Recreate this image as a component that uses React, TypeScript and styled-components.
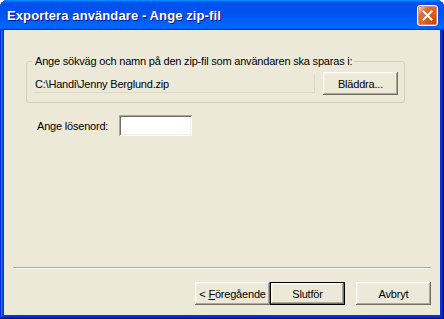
import React from "react";
import styled, { createGlobalStyle } from "styled-components";

const colors = {
  face: "#ECE9D8",
  highlight: "#FFFFFF",
  light: "#F1EFE2",
  shadow: "#ACA899",
  darkShadow: "#716F64",
  groupLine: "#D0D0BF",
  text: "#000000",
};

const GlobalStyle = createGlobalStyle`
  html, body {
    margin: 0;
    padding: 0;
    background: #ffffff;
  }
  body {
    font-family: Tahoma, "Liberation Sans", Arial, sans-serif;
    font-size: 11px;
    letter-spacing: -0.2px;
    color: ${colors.text};
  }
`;

const Window = styled.div`
  width: 444px;
  height: 319px;
  display: flex;
  flex-direction: column;
  border-radius: 8px 8px 0 0;
  overflow: hidden;
  background: #0831d9;
  box-shadow: inset -1px -1px #00138c, inset 1px 1px #0831d9,
    inset -2px -2px #001ea0, inset 2px 2px #166aee, inset -3px -3px #003bda,
    inset 3px 3px #0855dd;
`;

const TitleBar = styled.div`
  height: 30px;
  flex: 0 0 30px;
  display: flex;
  align-items: center;
  justify-content: space-between;
  padding: 0 6px 0 7px;
  box-sizing: border-box;
  background: linear-gradient(
    180deg,
    #0997ff,
    #0053ee 8%,
    #0050ee 40%,
    #06f 88%,
    #06f 93%,
    #005bff 95%,
    #003dd7 96%,
    #003dd7
  );
`;

const Title = styled.span`
  color: #ffffff;
  font-family: "Trebuchet MS", "Liberation Sans", Arial, sans-serif;
  font-weight: bold;
  font-size: 13px;
  letter-spacing: 0.1px;
  text-shadow: 1px 1px #0f1089;
  padding-top: 1px;
`;

const CloseButton = styled.button`
  width: 21px;
  height: 21px;
  padding: 0;
  border: 1px solid #ffffff;
  border-radius: 3px;
  display: flex;
  align-items: center;
  justify-content: center;
  background: radial-gradient(
    circle at 90% 90%,
    #cc4600 0,
    #dc6527 55%,
    #cd7546 70%,
    #ffccb2 90%,
    #fff 100%
  );
  box-shadow: inset 0 0 0 1px #e9855b;
`;

const Client = styled.div`
  flex: 1;
  margin: 0 4px 4px 4px;
  background: ${colors.face};
  display: flex;
  flex-direction: column;
`;

const Content = styled.div`
  padding: 25px 0 0 22px;
  display: flex;
  flex-direction: column;
`;

const GroupBox = styled.fieldset`
  margin: 0;
  width: 378px;
  box-sizing: border-box;
  border: 1px solid ${colors.groupLine};
  border-radius: 3px;
  padding: 4px 6px 7px 6px;
`;

const Legend = styled.legend`
  padding: 0 2px;
  margin-left: 0;
  line-height: 13px;
`;

const PathRow = styled.div`
  display: flex;
  align-items: center;
  gap: 8px;
`;

const PathField = styled.div`
  width: 282px;
  height: 19px;
  box-sizing: border-box;
  border: 1px solid #dcd8c8;
  border-top-color: ${colors.face};
  border-left-color: ${colors.face};
  padding: 0 1px;
  display: flex;
  align-items: center;
`;

const Button = styled.button<{ $default?: boolean }>`
  width: 75px;
  height: 23px;
  padding: 0;
  box-sizing: border-box;
  font: inherit;
  letter-spacing: inherit;
  color: ${colors.text};
  background: ${colors.face};
  border: ${(p) => (p.$default ? "1px solid #000" : "none")};
  box-shadow: inset -1px -1px ${colors.darkShadow},
    inset 1px 1px ${colors.highlight}, inset -2px -2px ${colors.shadow},
    inset 2px 2px ${colors.light};
`;

const PasswordRow = styled.div`
  display: flex;
  align-items: center;
  margin: 12px 0 0 11px;
`;

const Label = styled.label`
  width: 82px;
`;

const PasswordInput = styled.input`
  width: 73px;
  height: 21px;
  box-sizing: border-box;
  border: none;
  outline: none;
  padding: 2px 3px;
  font: inherit;
  background: #ffffff;
  box-shadow: inset 1px 1px ${colors.shadow}, inset -1px -1px ${colors.highlight},
    inset 2px 2px ${colors.darkShadow}, inset -2px -2px ${colors.light};
`;

const Footer = styled.div`
  margin-top: auto;
  padding: 0 9px 10px 9px;
  display: flex;
  flex-direction: column;
`;

const Separator = styled.div`
  height: 0;
  border-top: 1px solid ${colors.shadow};
  border-bottom: 1px solid ${colors.highlight};
  margin-bottom: 13px;
`;

const ButtonRow = styled.div`
  display: flex;
  justify-content: flex-end;
  align-items: center;
`;

const ButtonGap = styled.div`
  width: 11px;
`;

const CloseIcon = () => (
  <svg width="13" height="13" viewBox="0 0 13 13">
    <path
      d="M2.5 2.5 L10.5 10.5 M10.5 2.5 L2.5 10.5"
      stroke="#ffffff"
      strokeWidth="2"
      strokeLinecap="square"
    />
  </svg>
);

const App: React.FC = (): JSX.Element => {
  return (
    <>
      <GlobalStyle />
      <Window>
        <TitleBar>
          <Title>Exportera användare - Ange zip-fil</Title>
          <CloseButton aria-label='Stäng'>
            <CloseIcon />
          </CloseButton>
        </TitleBar>
        <Client>
          <Content>
            <GroupBox>
              <Legend>
                Ange sökväg och namn på den zip-fil som användaren ska sparas i:
              </Legend>
              <PathRow>
                <PathField>C:\Handi\Jenny Berglund.zip</PathField>
                <Button>Bläddra...</Button>
              </PathRow>
            </GroupBox>
            <PasswordRow>
              <Label htmlFor='pwd'>Ange lösenord:</Label>
              <PasswordInput id='pwd' type='password' />
            </PasswordRow>
          </Content>
          <Footer>
            <Separator />
            <ButtonRow>
              <Button>
                &lt; <u>F</u>öregående
              </Button>
              <Button $default>Slutför</Button>
              <ButtonGap />
              <Button>Avbryt</Button>
            </ButtonRow>
          </Footer>
        </Client>
      </Window>
    </>
  );
};

export default App;
